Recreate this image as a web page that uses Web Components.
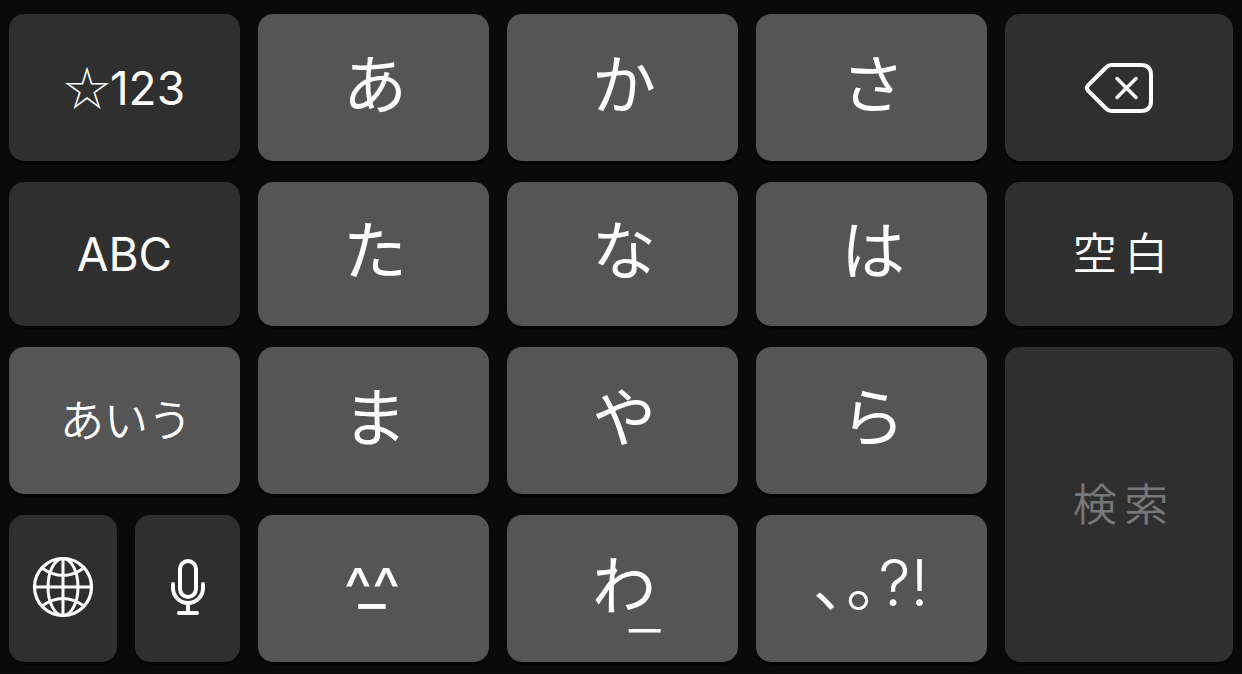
<!DOCTYPE html>
<html lang="ja">
<head>
<meta charset="utf-8">
<meta name="viewport" content="width=device-width, initial-scale=1">
<title>かなキーボード</title>
<style>
  body { margin: 0; background: #0a0a0a; }
</style>
</head>
<body>
<kana-keyboard></kana-keyboard>

<template id="keyboard-template">
  <style>
    :host {
      display: grid;
      box-sizing: border-box;
      min-height: 100vh;
      padding: 14px 9px 11px;
      border-bottom: 1px solid #000;
      gap: 21px 18px;
      grid-template-columns: repeat(4, minmax(0, 77fr)) minmax(0, 76fr);
      grid-template-rows: 49fr 48fr 49fr 49fr;
      background: #0a0a0a;
      color: #fff;
    }
    .tall { grid-row: span 2; }
    .pair { display: grid; grid-template-columns: 36fr 35fr; gap: 18px; }
    .star { font-family: "Noto Sans CJK JP", sans-serif; font-weight: 300; line-height: 1; }
    svg { display: block; fill: none; stroke: #fff; stroke-linecap: round; stroke-linejoin: round; }
  </style>
  <kana-key tone="dark" size="small"><span><span class="star">☆</span>123</span></kana-key>
  <kana-key>あ</kana-key>
  <kana-key>か</kana-key>
  <kana-key>さ</kana-key>
  <kana-key tone="dark" size="small" label="削除">
    <svg width="70" height="52" viewBox="0 0 70 52" stroke-width="4">
      <path d="M27.500 3H57Q67 3 67 13V39Q67 49 57 49H27.500Q24.500 49 22 46.500L3.800 28.300Q1.800 26 3.800 23.700L22 5.500Q24.500 3 27.500 3Z"/>
      <path d="M33 16.500L52 35.500M52 16.500L33 35.500" stroke-width="3.500"/>
    </svg>
  </kana-key>

  <kana-key tone="dark" size="small">ABC</kana-key>
  <kana-key>た</kana-key>
  <kana-key>な</kana-key>
  <kana-key>は</kana-key>
  <kana-key tone="dark" size="word">空&#8198;白</kana-key>

  <kana-key size="word">あいう</kana-key>
  <kana-key>ま</kana-key>
  <kana-key>や</kana-key>
  <kana-key>ら</kana-key>
  <kana-key class="tall" tone="dark" size="word" disabled>検&#8198;索</kana-key>

  <div class="pair">
    <kana-key tone="dark" size="icon" label="次のキーボード">
      <svg width="62" height="62" viewBox="0 0 62 62" stroke-width="3">
        <circle cx="31" cy="31" r="28.500" stroke-width="3.200"/>
        <ellipse cx="31" cy="31" rx="15" ry="28.500"/>
        <path d="M31 3V59M3 31H59M10 12Q31 27 52 12M10 50Q31 35 52 50"/>
      </svg>
    </kana-key>
    <kana-key tone="dark" size="icon" label="音声入力">
      <svg width="36" height="58" viewBox="0 0 36 58" stroke-width="4">
        <rect x="10" y="3" width="16" height="36" rx="8"/>
        <path d="M3 26V30A15 15 0 0 0 33 30V26M18 45V54M9 55H27"/>
      </svg>
    </kana-key>
  </div>
  <kana-key size="face"><span>^^</span><span>_</span></kana-key>
  <kana-key><kana-underscored>わ</kana-underscored></kana-key>
  <kana-key size="marks">､｡?!</kana-key>
</template>

<template id="key-template">
  <style>
    :host { display: grid; min-width: 0; }
    button {
      display: flex;
      flex-direction: column;
      align-items: center;
      justify-content: center;
      margin: 0;
      padding: 0 0 6px 3px;
      border: 0;
      border-radius: 15px;
      background: #555;
      box-shadow: 0 3px 1px #050505;
      color: #fff;
      font: 400 64px/72px Inter, "Noto Sans CJK JP", sans-serif;
      white-space: nowrap;
    }
    :host([tone="dark"]) button { background: #2f2f2f; }
    :host([size="small"]) button { padding: 0; font-size: 46px; }
    :host([size="word"]) button { padding: 0 0 0 3px; font-size: 44px; font-weight: 350; }
    :host([size="icon"]) button { padding: 0 0 4px; }
    :host([size="face"]) button { flex-direction: column-reverse; padding: 0 3px 8px 0; font-size: 60px; line-height: 6px; }
    :host([size="marks"]) button { padding: 0 0 12px; font-weight: 350; }
    :host([disabled]) button { color: #787878; }
  </style>
  <button type="button"><slot></slot></button>
</template>

<template id="underscored-template">
  <style>
    :host { display: block; position: relative; }
    .mark {
      position: absolute;
      left: 36px;
      top: 12px;
      font-family: "Noto Sans CJK JP", sans-serif;
      font-size: 60px;
      font-weight: 350;
    }
  </style>
  <slot></slot><span class="mark">_</span>
</template>

<script>
  class TemplateElement extends HTMLElement {
    constructor() {
      super();
      const template = document.getElementById(this.constructor.template);
      this.attachShadow({ mode: "open" }).append(template.content.cloneNode(true));
    }
  }

  class KanaUnderscored extends TemplateElement {
    static template = "underscored-template";
  }

  class KanaKey extends TemplateElement {
    static template = "key-template";
    connectedCallback() {
      const button = this.shadowRoot.querySelector("button");
      button.disabled = this.hasAttribute("disabled");
      if (this.hasAttribute("label")) {
        button.setAttribute("aria-label", this.getAttribute("label"));
      }
    }
  }

  class KanaKeyboard extends TemplateElement {
    static template = "keyboard-template";
  }

  customElements.define("kana-underscored", KanaUnderscored);
  customElements.define("kana-key", KanaKey);
  customElements.define("kana-keyboard", KanaKeyboard);
</script>
</body>
</html>
